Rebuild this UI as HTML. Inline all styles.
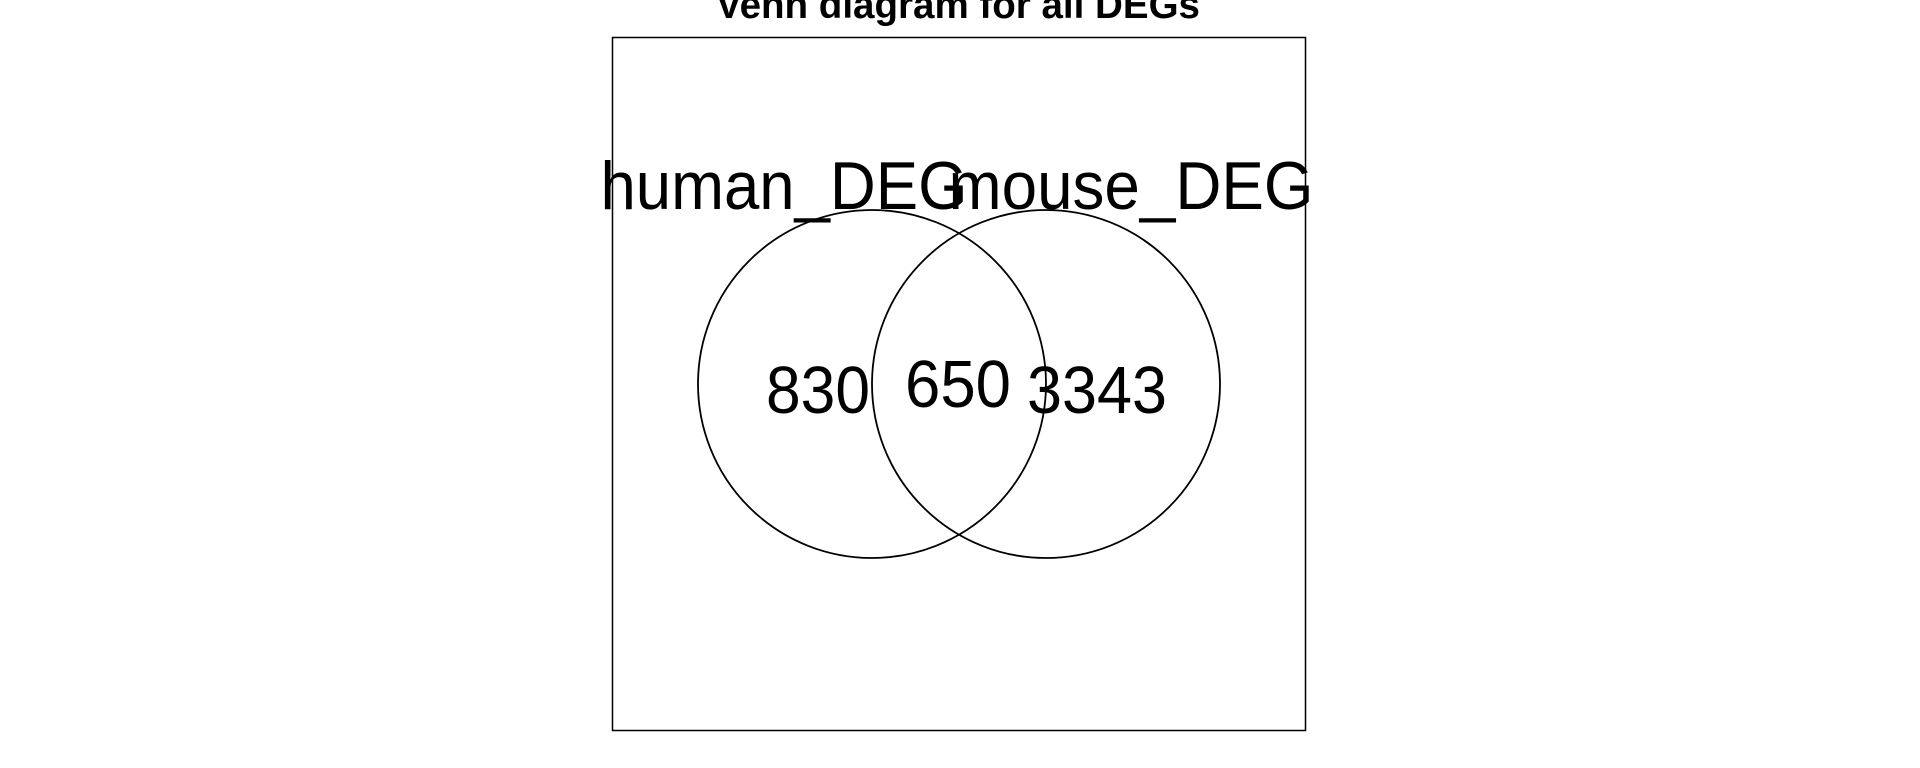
<!DOCTYPE html>
<html><head><meta charset="utf-8"><style>
html,body{margin:0;padding:0;background:#fff;width:1920px;height:768px;overflow:hidden}
svg{display:block}
text{font-family:"Liberation Sans",Arial,sans-serif;fill:#000}
</style></head><body>
<svg width="1920" height="768" viewBox="0 0 1920 768">
<text x="958" y="18" text-anchor="middle" font-size="39" font-weight="bold" textLength="484" lengthAdjust="spacingAndGlyphs">Venn diagram for all DEGs</text>
<rect x="612.5" y="37.5" width="693" height="693" fill="none" stroke="#000" stroke-width="1.5"/>
<circle cx="872" cy="384" r="174" fill="none" stroke="#000" stroke-width="1.8"/>
<circle cx="1046" cy="384" r="174" fill="none" stroke="#000" stroke-width="1.8"/>
<text x="784" y="209" text-anchor="middle" font-size="68" textLength="367" lengthAdjust="spacingAndGlyphs">human_DEG</text>
<text x="1131" y="209" text-anchor="middle" font-size="68" textLength="365" lengthAdjust="spacingAndGlyphs">mouse_DEG</text>
<text x="818" y="413" text-anchor="middle" font-size="67" textLength="104" lengthAdjust="spacingAndGlyphs">830</text>
<text x="958" y="407" text-anchor="middle" font-size="67" textLength="106" lengthAdjust="spacingAndGlyphs">650</text>
<text x="1097" y="413" text-anchor="middle" font-size="67" textLength="140" lengthAdjust="spacingAndGlyphs">3343</text>
</svg>
</body></html>
